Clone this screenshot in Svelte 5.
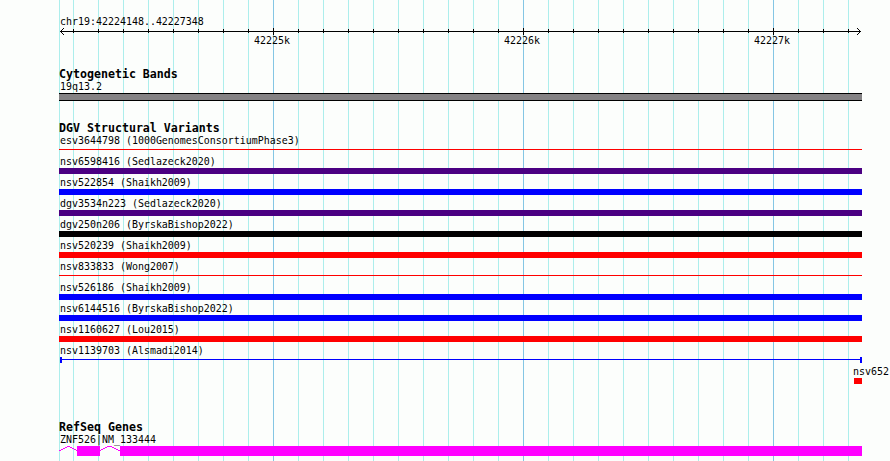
<script lang="ts">
	type Shape = 'bar' | 'line' | 'span';
	type Variant = { name: string; shape: Shape; color: string; start?: number };

	const region = 'chr19:42224148..42227348';

	// Vertical guides: one at the region start, then every 100 bp; majors every 1 kb
	const ticks = Array.from({ length: 32 }, (_, i) => 73 + i * 25);
	const majors = [
		{ x: 273, label: '42225k' },
		{ x: 523, label: '42226k' },
		{ x: 773, label: '42227k' }
	];
	const isMajor = (x: number) => majors.some((m) => m.x === x);

	const variants: Variant[] = [
		{ name: 'esv3644798 (1000GenomesConsortiumPhase3)', shape: 'line', color: 'red' },
		{ name: 'nsv6598416 (Sedlazeck2020)', shape: 'bar', color: 'purple' },
		{ name: 'nsv522854 (Shaikh2009)', shape: 'bar', color: 'blue' },
		{ name: 'dgv3534n223 (Sedlazeck2020)', shape: 'bar', color: 'purple' },
		{ name: 'dgv250n206 (ByrskaBishop2022)', shape: 'bar', color: 'black' },
		{ name: 'nsv520239 (Shaikh2009)', shape: 'bar', color: 'red' },
		{ name: 'nsv833833 (Wong2007)', shape: 'line', color: 'red' },
		{ name: 'nsv526186 (Shaikh2009)', shape: 'bar', color: 'blue' },
		{ name: 'nsv6144516 (ByrskaBishop2022)', shape: 'bar', color: 'blue' },
		{ name: 'nsv1160627 (Lou2015)', shape: 'bar', color: 'red' },
		{ name: 'nsv1139703 (Alsmadi2014)', shape: 'span', color: 'blue' },
		{ name: 'nsv652', shape: 'bar', color: 'red', start: 795 }
	];
</script>

<div class="browser">
	<svg class="guides" width="890" height="461" shape-rendering="crispEdges" aria-hidden="true">
		<rect class="guide" x="59" y="0" width="1" height="461" />
		{#each ticks as x}
			<rect class="guide" class:major={isMajor(x)} {x} y="0" width="1" height="461" />
		{/each}
	</svg>

	<header>
		<div class="label">{region}</div>
		<svg class="ruler" width="890" height="20" viewBox="0 28 890 20">
			<g shape-rendering="crispEdges">
				<rect x="60" y="31" width="801" height="1" />
				{#each ticks as x}
					<rect {x} y={isMajor(x) ? 28 : 29} width="1" height={isMajor(x) ? 7 : 4} />
				{/each}
				<!-- arrow heads -->
				{#each [1, 2, 3] as d}
					<rect x={60 + d} y={31 - d} width="1" height="1" />
					<rect x={60 + d} y={31 + d} width="1" height="1" />
					<rect x={860 - d} y={31 - d} width="1" height="1" />
					<rect x={860 - d} y={31 + d} width="1" height="1" />
				{/each}
			</g>
			{#each majors as m}
				<text x={m.x - 19} y="44">{m.label}</text>
			{/each}
		</svg>
	</header>

	<section class="cyto">
		<h2>Cytogenetic Bands</h2>
		<div class="label">19q13.2</div>
		<div class="band"></div>
	</section>

	<section class="variants">
		<h2>DGV Structural Variants</h2>
		{#each variants as v}
			<div class="row" style:margin-left={v.start ? `${v.start}px` : null}>
				<div class="label" class:inset={v.start}>{v.name}</div>
				<div class="glyph {v.shape} {v.color}"></div>
			</div>
		{/each}
	</section>

	<section class="genes">
		<h2>RefSeq Genes</h2>
		<div class="label">ZNF526|NM_133444</div>
		<svg class="gene" width="803" height="10" shape-rendering="crispEdges">
			<path d="M0 4.5h1l2-1 2-1 2-1 2-1h1l2 1 2 1 2 1 2 1h2" />
			<rect x="18" y="0" width="23" height="10" />
			<path d="M41 4.5l2-1 2-1 2-1 2-1h3l2 1 2 1 2 1 2 1h1" />
			<rect x="61" y="0" width="742" height="10" />
		</svg>
	</section>
</div>

<style>
	:global(body) {
		background: #fcfefc;
	}
	.browser {
		position: relative;
		width: 890px;
		height: 461px;
		overflow: hidden;
		color: #000;
		font-family: 'DejaVu Sans Mono', 'Liberation Mono', monospace;
		font-size: 9.967px;
	}
	.guides {
		position: absolute;
		inset: 0;
		z-index: -1;
	}
	.guide {
		fill: #aceeec;
	}
	.guide.major {
		fill: #84c6e4;
	}

	header {
		height: 53px;
		padding-top: 13px;
	}
	header .label {
		margin-left: 59px;
	}
	.ruler {
		display: block;
	}

	section {
		width: 803px;
		margin-left: 59px;
	}
	.variants {
		margin-top: 19px;
	}
	.genes {
		margin-top: 35px;
	}
	h2 {
		height: 12px;
		margin: 0;
		line-height: 16px;
		font-size: 11.628px;
		font-weight: bold;
		white-space: pre;
	}
	.label {
		box-sizing: border-box;
		height: 15px;
		padding: 1px 0 0 1px;
		line-height: 15px;
		white-space: pre;
	}
	.label.inset {
		padding-left: 0;
		margin-left: -1px;
	}
	.band {
		height: 6px;
		border: solid #000;
		border-width: 1px 0;
		background: #848284;
	}

	.glyph {
		box-sizing: border-box;
		height: 6px;
	}
	.bar {
		background: currentColor;
	}
	.line {
		background: linear-gradient(currentColor, currentColor) 0 2px / 100% 1px no-repeat;
	}
	.span {
		margin-left: 1px;
		border: solid currentColor;
		border-width: 0 2px;
		background: linear-gradient(currentColor, currentColor) 0 2px / 100% 1px no-repeat;
	}
	.red {
		color: #ff0000;
	}
	.blue {
		color: #0000ff;
	}
	.purple {
		color: #4b0082;
	}
	.black {
		color: #000;
	}

	.gene {
		display: block;
	}
	.gene rect {
		fill: #ff00ff;
	}
	.gene path {
		fill: none;
		stroke: #ff00ff;
	}
</style>
